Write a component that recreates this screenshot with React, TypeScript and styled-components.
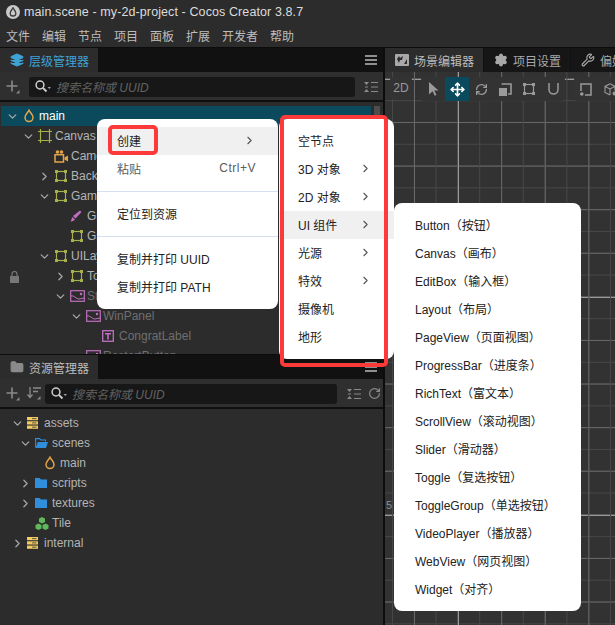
import React from "react";
import styled, { createGlobalStyle } from "styled-components";
import { Layers, ChevronDown, ChevronRight, Settings, Wrench, Move, RefreshCw, RotateCw, Folder } from "lucide-react";

const GlobalStyle = createGlobalStyle`
  html, body {
    margin: 0;
    padding: 0;
    background: #2c2c2c;
    overflow: hidden;
  }
  * { box-sizing: border-box; }
  #root {
    font-family: "Liberation Sans", "Noto Sans CJK SC", sans-serif;
  }
`;

const Window = styled.div`
  position: relative;
  width: 615px;
  height: 625px;
  overflow: hidden;
  display: flex;
  flex-direction: column;
  background: #2c2c2c;
  color: #c8c8c8;
`;

const TitleBar = styled.div`
  height: 24px;
  display: flex;
  align-items: center;
  gap: 4px;
  padding: 0 0 0 6px;
  font-size: 12.5px;
  color: #dcdcdc;
  letter-spacing: 0.1px;
`;

const AppLogo = styled.span`
  width: 14px;
  height: 14px;
  border-radius: 50%;
  background: #c9c9c9;
  display: flex;
  align-items: center;
  justify-content: center;
`;

const MenuBar = styled.div`
  height: 23px;
  display: flex;
  align-items: center;
  gap: 12px;
  padding-left: 6px;
  font-size: 12px;
  color: #bdbdbd;
`;

const Workspace = styled.div`
  flex: 1;
  display: flex;
  min-height: 0;
  background: #0c0c0c;
  padding-top: 1px;
  gap: 2px;
`;

const LeftColumn = styled.div`
  width: 383px;
  display: flex;
  flex-direction: column;
  gap: 1px;
`;

const Panel = styled.div<{ $h?: number }>`
  display: flex;
  flex-direction: column;
  background: #2c2c2c;
  ${(p) => (p.$h ? `height: ${p.$h}px;` : "flex: 1;")}
  overflow: hidden;
`;

const TabStrip = styled.div`
  height: 24px;
  display: flex;
  align-items: stretch;
  background: #111111;
  flex-shrink: 0;
`;

const Tab = styled.div<{ $active?: boolean; $accent?: boolean }>`
  display: flex;
  align-items: center;
  gap: 5px;
  padding: 0 9px 0 10px;
  font-size: 12px;
  white-space: nowrap;
  margin-right: 1px;
  background: ${(p) => (p.$active ? "#2c2c2c" : "#161616")};
  color: ${(p) => (p.$accent ? "#3fa3d6" : p.$active ? "#bcbcbc" : "#a8a8a8")};
`;

const TabFill = styled.div`
  flex: 1;
  display: flex;
  align-items: center;
  justify-content: flex-end;
  padding-right: 6px;
`;

const Toolbar = styled.div<{ $gap: number; $right: number }>`
  height: 30px;
  display: flex;
  align-items: center;
  padding: 1px ${(p) => p.$right}px 0 6px;
  gap: ${(p) => p.$gap}px;
  background: #2f2f2f;
  border-bottom: 2px solid #0f0f0f;
  color: #8a8a8a;
  flex-shrink: 0;
`;

const Cluster = styled.div<{ $ml?: number }>`
  display: flex;
  align-items: center;
  gap: 7px;
  margin-left: ${(p) => p.$ml ?? 0}px;
`;

const SearchBox = styled.div`
  flex: 1;
  height: 20px;
  border-radius: 3px;
  background: #171717;
  display: flex;
  align-items: center;
  gap: 5px;
  padding-left: 6px;
  font-size: 12px;
  font-style: italic;
  color: #626262;
`;

const Tree = styled.div`
  padding-top: 4px;
  flex: 1;
  position: relative;
  overflow: hidden;
`;

const Row = styled.div<{ $pad: number; $selected?: boolean; $dim?: boolean }>`
  height: 20px;
  display: flex;
  align-items: center;
  gap: 3px;
  padding-left: ${(p) => p.$pad - (p.$selected ? 1 : 0)}px;
  font-size: 12px;
  margin-left: ${(p) => (p.$selected ? "1px" : "0")};
  margin-right: ${(p) => (p.$selected ? "12px" : "0")};
  background: ${(p) => (p.$selected ? "#0b4a5c" : "transparent")};
  color: ${(p) => (p.$selected ? "#ffffff" : p.$dim ? "#6f6f6f" : "#b4b4b4")};
  white-space: nowrap;
`;

const Caret = styled.span`
  width: 14px;
  height: 13px;
  display: flex;
  align-items: center;
  justify-content: center;
  color: #a6a6a6;
  flex-shrink: 0;
`;

const IconSlot = styled.span`
  width: 14px;
  height: 14px;
  display: flex;
  align-items: center;
  justify-content: flex-start;
  flex-shrink: 0;
`;

const LockBadge = styled.span`
  position: absolute;
  left: 10px;
  top: 169px;
`;

const ScrollThumb = styled.div`
  position: absolute;
  right: 3px;
  top: 4px;
  width: 6px;
  height: 24px;
  background: #4d4d4d;
`;

const SceneColumn = styled.div`
  flex: 1;
  min-width: 0;
  display: flex;
  flex-direction: column;
  background: #2c2c2c;
`;

const Viewport = styled.div`
  flex: 1;
  position: relative;
  background-color: #323232;
  background-image:
    linear-gradient(90deg, #9a9a9a 1px, transparent 1px),
    linear-gradient(90deg, #686868 1px, transparent 1px),
    linear-gradient(90deg, #474747 1px, transparent 1px),
    linear-gradient(#9a9a9a 1px, transparent 1px),
    linear-gradient(#686868 1px, transparent 1px),
    linear-gradient(#474747 1px, transparent 1px);
  background-size: 218px 100%, 43.6px 100%, 21.8px 100%, 100% 218px, 100% 43.6px, 100% 21.8px;
  background-position: 73px 0, 29px 0, 7px 0, 0 7px, 0 6.4px, 0 6.4px;
`;

const SceneToolbar = styled.div`
  display: flex;
  align-items: flex-start;
  gap: 9px;
  padding: 5px 0 0 5px;
`;

const ToolGroup = styled.div<{ $h?: number }>`
  height: ${(p) => p.$h ?? 24}px;
  display: flex;
  align-items: stretch;
  border-radius: 3px;
  background: #333;
  color: #9a9a9a;
  font-size: 12px;
`;

const Tool = styled.div<{ $active?: boolean; $w?: number }>`
  width: ${(p) => p.$w ?? 24}px;
  display: flex;
  align-items: center;
  justify-content: center;
  background: ${(p) => (p.$active ? "#0b4a5c" : "transparent")};
  color: ${(p) => (p.$active ? "#ffffff" : "#9a9a9a")};
`;

const AxisLabel = styled.span`
  position: absolute;
  left: 1px;
  top: 427px;
  font-size: 11px;
  color: #8c8c8c;
`;

const ContextMenu = styled.div<{ $top: number; $left: number; $w: number }>`
  position: absolute;
  top: ${(p) => p.$top}px;
  left: ${(p) => p.$left}px;
  width: ${(p) => p.$w}px;
  padding: 8px 0;
  background: #ffffff;
  border-radius: 8px;
  color: #1f1f1f;
  font-size: 12px;
  z-index: 3;
`;

const MenuRow = styled.div<{ $hover?: boolean; $muted?: boolean; $inset: number }>`
  height: 28px;
  display: flex;
  align-items: center;
  justify-content: space-between;
  padding: 0 22px 2px ${(p) => p.$inset}px;
  white-space: nowrap;
  background: ${(p) => (p.$hover ? "#f0f0f0" : "transparent")};
  color: ${(p) => (p.$muted ? "#5c5c5c" : "#222")};
`;

const Shortcut = styled.span`
  letter-spacing: 0.5px;
`;

const Arrow = styled.span`
  display: flex;
  color: #555;
`;

const Divider = styled.div`
  height: 1px;
  margin: 8px 0;
  background: #d5e1f2;
`;

const Callout = styled.div<{ $top: number; $left: number; $w: number; $h: number }>`
  position: absolute;
  top: ${(p) => p.$top}px;
  left: ${(p) => p.$left}px;
  width: ${(p) => p.$w}px;
  height: ${(p) => p.$h}px;
  border: 4px solid #fc3a3a;
  border-radius: 5px;
  z-index: 4;
`;

const DrawnIcon = styled.svg`
  display: block;
  flex-shrink: 0;
`;

const drop = "M7 1.2C8 3.6 11 5.6 11 8.6a4 4 0 0 1-8 0C3 5.6 6 3.6 7 1.2Z";

const SceneIcon = () => (
  <DrawnIcon width="14" height="14" viewBox="0 0 14 14" fill="none">
    <path d={drop} stroke="#e4a54a" strokeWidth="1.5" />
  </DrawnIcon>
);

const NodeIcon = ({ color = "#a7b04a" }: { color?: string }) => (
  <DrawnIcon width="14" height="14" viewBox="0 0 14 14" fill="none">
    <rect x="2.5" y="2.5" width="9" height="9" stroke={color} strokeWidth="1.2" />
    <path d="M1 1h3v3H1zM10 1h3v3h-3zM1 10h3v3H1zM10 10h3v3h-3z" fill={color} />
  </DrawnIcon>
);

const CanvasIcon = () => (
  <DrawnIcon width="14" height="14" viewBox="0 0 14 14" fill="none">
    <path d="M0 2.5h14M0 11.5h14M2.5 0v14M11.500 0v14" stroke="#a7b04a" strokeWidth="1.200" />
  </DrawnIcon>
);

const CameraIcon = () => (
  <DrawnIcon width="14" height="13" viewBox="0 0 14 13" fill="none">
    <circle cx="3.500" cy="2" r="1.800" fill="#e4a54a" />
    <circle cx="7.500" cy="2" r="1.800" fill="#e4a54a" />
    <rect x="1" y="4.700" width="8.500" height="7.300" stroke="#e4a54a" strokeWidth="1.500" />
    <path d="M10.500 7.500L14 5.500v6L10.500 9.500Z" fill="#e4a54a" />
  </DrawnIcon>
);

const BrushIcon = () => (
  <DrawnIcon width="12" height="12" viewBox="0 0 12 12">
    <path d="M10 .5l1.500 1.500-6 6.500-2.500-2.500Z" fill="#c06fc0" />
    <path d="M2.500 7l2.500 2.500C4 11 2 11.500.5 11.500 1.500 10.500 1.500 8 2.500 7Z" fill="#c06fc0" />
  </DrawnIcon>
);

const SpriteIcon = () => (
  <DrawnIcon width="15" height="12" viewBox="0 0 15 12" fill="none">
    <rect x="0.7" y="0.7" width="13.6" height="10.6" stroke="#c06fc0" strokeWidth="1.2" />
    <path d="M1 6c3-1 5 3 8 3l5-1" stroke="#c06fc0" />
    <circle cx="11" cy="4" r="1.2" fill="#c06fc0" />
  </DrawnIcon>
);

const LabelIcon = () => (
  <DrawnIcon width="12" height="12" viewBox="0 0 12 12" fill="none">
    <rect x="0.7" y="0.7" width="10.6" height="10.6" stroke="#c06fc0" strokeWidth="1.3" />
    <path d="M3 3h6v1.500H6.800V9.500H5.200V4.500H3Z" fill="#c06fc0" />
  </DrawnIcon>
);

const LockIcon = () => (
  <DrawnIcon width="9" height="12" viewBox="0 0 9 12" fill="none">
    <path d="M2 5V3a2.500 2.500 0 0 1 5 0v2" stroke="#777" strokeWidth="1.200" />
    <rect y="5" width="9" height="7" rx="0.5" fill="#777" />
  </DrawnIcon>
);

const DatabaseIcon = () => (
  <DrawnIcon width="11" height="12" viewBox="0 0 11 12">
    <rect width="11" height="3.2" fill="#f3cb62" />
    <rect y="4.300" width="11" height="3.2" fill="#f3cb62" />
    <rect y="8.600" width="11" height="3.2" fill="#f3cb62" />
    <path d="M5 1.600h4.500M5 5.900h4.500M5 10.200h4.500" stroke="#4a4a3a" strokeWidth="0.9" />
  </DrawnIcon>
);

const FolderIcon = () => (
  <DrawnIcon width="12" height="10" viewBox="0 0 12 10">
    <path d="M0 0h4.500l1.500 1.500H12V10H0Z" fill="#2f8fdc" />
  </DrawnIcon>
);

const FolderOpenIcon = () => (
  <DrawnIcon width="13" height="10" viewBox="0 0 13 10" fill="none">
    <path d="M.6 9.500V.6h3.800l1.500 1.400h4.600v1.500" stroke="#2f8fdc" strokeWidth="1.100" />
    <path d="M2.800 4H13l-2 6H.6Z" fill="#2f8fdc" />
  </DrawnIcon>
);

const CubesIcon = () => (
  <DrawnIcon width="14" height="13" viewBox="0 0 14 13">
    <path d="M7 0l3 1.600v3.400L7 6.600 4 5V1.600Z" fill="#5fb85c" />
    <path d="M3.500 6.400l3 1.600v3.400L3.500 13 .5 11.400V8Z" fill="#5fb85c" />
    <path d="M10.500 6.400l3 1.600v3.400L10.500 13l-3-1.600V8Z" fill="#5fb85c" />
  </DrawnIcon>
);

const SceneTabIcon = () => (
  <DrawnIcon width="14" height="12" viewBox="0 0 14 12">
    <rect width="14" height="12" rx="1" fill="#a8a8a8" />
    <path d="M2 5l2-3 1 2 3-2-1 4-2 0-1 3Z" fill="#2c2c2c" />
    <path d="M9 10l3-5v5Z" fill="#2c2c2c" />
  </DrawnIcon>
);

const BurgerIcon = () => (
  <DrawnIcon width="12" height="10" viewBox="0 0 12 10">
    <path d="M0 0h12v2H0zM0 4h12v2H0zM0 8h12v2H0z" fill="#8f8f8f" />
  </DrawnIcon>
);

const CollapseIcon = () => (
  <DrawnIcon width="14" height="12" viewBox="0 0 14 12">
    <path d="M0 1h5L2.500 4ZM0 11h5L2.500 8Z" fill="#8a8a8a" />
    <path d="M7 1.500h7M7 6h7M7 10.500h7M1 6h3" stroke="#8a8a8a" strokeWidth="1.200" />
  </DrawnIcon>
);

const SortIcon = () => (
  <DrawnIcon width="14" height="13" viewBox="0 0 14 13" fill="none">
    <path d="M3 0v10M.5 7.500L3 10.500l2.500-3M6 1h8M6 4.500h5" stroke="#8a8a8a" strokeWidth="1.300" />
    <path d="M13.500 9v3.500H10Z" fill="#8a8a8a" />
  </DrawnIcon>
);

const AddIcon = () => (
  <DrawnIcon width="14" height="14" viewBox="0 0 14 14">
    <path d="M5.200 0.500h1.600v4.700h4.700v1.600H6.800v4.700H5.200V6.800H.5V5.200h4.700Z" fill="#8a8a8a" />
    <path d="M13.500 10v3.500H10Z" fill="#8a8a8a" />
  </DrawnIcon>
);

const SearchIcon = () => (
  <DrawnIcon width="16" height="13" viewBox="0 0 16 13" fill="none">
    <circle cx="5" cy="5" r="3.900" stroke="#cfcfcf" strokeWidth="1.500" />
    <path d="M8 8l3.500 3.500" stroke="#cfcfcf" strokeWidth="1.800" />
    <path d="M12.500 7h3.500l-1.750 2Z" fill="#a0a0a0" />
  </DrawnIcon>
);

const CursorIcon = () => (
  <DrawnIcon width="11" height="14" viewBox="0 0 11 14">
    <path d="M1 0l9.500 8.500H6.300L8.500 13l-1.800.8-2.100-4.500L1 12.500Z" fill="#9a9a9a" />
  </DrawnIcon>
);

const ScaleIcon = () => (
  <DrawnIcon width="13" height="13" viewBox="0 0 13 13" fill="none">
    <path d="M2.500 1h9.500v10h-3" stroke="#9a9a9a" strokeWidth="1.600" />
    <path d="M0 5h8v8H0z" fill="#9a9a9a" />
  </DrawnIcon>
);

const MagnetIcon = () => (
  <DrawnIcon width="11" height="12" viewBox="0 0 11 12" fill="none">
    <path d="M1 0v6.500a4.500 4.500 0 0 0 9 0V0" stroke="#9a9a9a" strokeWidth="1.500" />
  </DrawnIcon>
);

const FrameIcon = () => (
  <DrawnIcon width="12" height="13" viewBox="0 0 12 13" fill="none">
    <path d="M1 8V1h10v11H5" stroke="#9a9a9a" strokeWidth="1.500" />
    <circle cx="1.800" cy="11" r="1.800" fill="#9a9a9a" />
  </DrawnIcon>
);

const CubeDotIcon = () => (
  <DrawnIcon width="13" height="13" viewBox="0 0 13 13" fill="none">
    <path d="M6 .8l5 2.600v4M6 .8L1 3.400v6L6 12M1 3.400L6 6l5-2.600M6 6v6" stroke="#9a9a9a" strokeWidth="1.100" />
    <circle cx="10.500" cy="10.500" r="2" fill="#9a9a9a" />
  </DrawnIcon>
);

const LogoDrop = () => (
  <DrawnIcon width="10" height="10" viewBox="0 0 14 14" fill="none">
    <path d={drop} stroke="#3a3a3a" strokeWidth="1.800" />
  </DrawnIcon>
);

type NodeRow = {
  level: number;
  caret?: "open" | "closed";
  icon: React.ReactNode;
  label: string;
  selected?: boolean;
  dim?: boolean;
};

const hierarchy: NodeRow[] = [
  { level: 0, caret: "open", icon: <SceneIcon />, label: "main", selected: true },
  { level: 1, caret: "open", icon: <CanvasIcon />, label: "Canvas" },
  { level: 2, icon: <CameraIcon />, label: "Camera" },
  { level: 2, caret: "closed", icon: <NodeIcon />, label: "Background" },
  { level: 2, caret: "open", icon: <NodeIcon />, label: "GameArea" },
  { level: 3, icon: <BrushIcon />, label: "Grid" },
  { level: 3, icon: <NodeIcon />, label: "Grid" },
  { level: 2, caret: "open", icon: <NodeIcon />, label: "UILayer" },
  { level: 3, caret: "closed", icon: <NodeIcon />, label: "TopBar" },
  { level: 3, caret: "open", icon: <SpriteIcon />, label: "StartPanel", dim: true },
  { level: 4, caret: "open", icon: <SpriteIcon />, label: "WinPanel", dim: true },
  { level: 5, icon: <LabelIcon />, label: "CongratLabel", dim: true },
  { level: 4, caret: "open", icon: <SpriteIcon />, label: "RestartButton", dim: true },
];

const assets: NodeRow[] = [
  { level: 0, caret: "open", icon: <DatabaseIcon />, label: "assets" },
  { level: 1, caret: "open", icon: <FolderOpenIcon />, label: "scenes" },
  { level: 2, icon: <SceneIcon />, label: "main" },
  { level: 1, caret: "closed", icon: <FolderIcon />, label: "scripts" },
  { level: 1, caret: "closed", icon: <FolderIcon />, label: "textures" },
  { level: 1, icon: <CubesIcon />, label: "Tile" },
  { level: 0, caret: "closed", icon: <DatabaseIcon />, label: "internal" },
];

const TreeRows = ({ rows, base, indent }: { rows: NodeRow[]; base: number; indent: number }) => (
  <>
    {rows.map((r, i) => (
      <Row key={i} $pad={base + r.level * indent} $selected={r.selected} $dim={r.dim}>
        <Caret>
          {r.caret === "open" && <ChevronDown size={13} strokeWidth={2.4} />}
          {r.caret === "closed" && <ChevronRight size={13} strokeWidth={2.4} />}
        </Caret>
        <IconSlot>{r.icon}</IconSlot>
        {r.label}
      </Row>
    ))}
  </>
);

const createItems: { label: string; sub?: boolean; hover?: boolean }[] = [
  { label: "空节点" },
  { label: "3D 对象", sub: true },
  { label: "2D 对象", sub: true },
  { label: "UI 组件", sub: true, hover: true },
  { label: "光源", sub: true },
  { label: "特效", sub: true },
  { label: "摄像机" },
  { label: "地形" },
];

const uiItems = [
  "Button（按钮）",
  "Canvas（画布）",
  "EditBox（输入框）",
  "Layout（布局）",
  "PageView（页面视图）",
  "ProgressBar（进度条）",
  "RichText（富文本）",
  "ScrollView（滚动视图）",
  "Slider（滑动器）",
  "Toggle（复选按钮）",
  "ToggleGroup（单选按钮）",
  "VideoPlayer（播放器）",
  "WebView（网页视图）",
  "Widget（对齐）",
];

export default function App() {
  return (
    <>
      <GlobalStyle />
      <Window>
        <TitleBar>
          <AppLogo>
            <LogoDrop />
          </AppLogo>
          main.scene - my-2d-project - Cocos Creator 3.8.7
        </TitleBar>
        <MenuBar>
          {["文件", "编辑", "节点", "项目", "面板", "扩展", "开发者", "帮助"].map((m) => (
            <span key={m}>{m}</span>
          ))}
        </MenuBar>
        <Workspace>
          <LeftColumn>
            <Panel $h={306}>
              <TabStrip>
                <Tab $active $accent>
                  <Layers size={14} color="#3fa3d6" fill="#3fa3d6" />
                  层级管理器
                </Tab>
                <TabFill>
                  <BurgerIcon />
                </TabFill>
              </TabStrip>
              <Toolbar $gap={9} $right={5}>
                <AddIcon />
                <SearchBox>
                  <SearchIcon />
                  搜索名称或 UUID
                </SearchBox>
                <CollapseIcon />
              </Toolbar>
              <Tree>
                <TreeRows rows={hierarchy} base={5} indent={16} />
                <LockBadge>
                  <LockIcon />
                </LockBadge>
                <ScrollThumb />
              </Tree>
            </Panel>
            <Panel>
              <TabStrip>
                <Tab $active>
                  <Folder size={14} color="#8a8a8a" fill="#8a8a8a" />
                  资源管理器
                </Tab>
                <TabFill>
                  <BurgerIcon />
                </TabFill>
              </TabStrip>
              <Toolbar $gap={4} $right={2}>
                <Cluster>
                  <AddIcon />
                  <SortIcon />
                </Cluster>
                <SearchBox>
                  <SearchIcon />
                  搜索名称或 UUID
                </SearchBox>
                <Cluster $ml={6}>
                  <CollapseIcon />
                  <RotateCw size={13} strokeWidth={2.2} />
                </Cluster>
              </Toolbar>
              <Tree>
                <TreeRows rows={assets} base={10} indent={8} />
              </Tree>
            </Panel>
          </LeftColumn>
          <SceneColumn>
            <TabStrip>
              <Tab $active>
                <SceneTabIcon />
                场景编辑器
              </Tab>
              <Tab>
                <Settings size={14} color="#a8a8a8" fill="#a8a8a8" />
                项目设置
              </Tab>
              <Tab>
                <Wrench size={14} color="#a8a8a8" />
                偏好设置
              </Tab>
            </TabStrip>
            <Viewport>
              <SceneToolbar>
                <ToolGroup $h={22}>
                  <Tool $w={22}>2D</Tool>
                </ToolGroup>
                <ToolGroup>
                  <Tool><CursorIcon /></Tool>
                  <Tool $active><Move size={15} strokeWidth={2.6} /></Tool>
                  <Tool><RefreshCw size={13} strokeWidth={2.4} /></Tool>
                  <Tool><ScaleIcon /></Tool>
                  <Tool><NodeIcon color="#9a9a9a" /></Tool>
                  <Tool><MagnetIcon /></Tool>
                </ToolGroup>
                <ToolGroup>
                  <Tool><FrameIcon /></Tool>
                  <Tool><CubeDotIcon /></Tool>
                </ToolGroup>
              </SceneToolbar>
              <AxisLabel>5</AxisLabel>
            </Viewport>
          </SceneColumn>
        </Workspace>

        <ContextMenu $top={119} $left={97} $w={181}>
          <MenuRow $hover $inset={20}>
            创建
            <Arrow><ChevronRight size={13} /></Arrow>
          </MenuRow>
          <MenuRow $muted $inset={20}>
            粘贴
            <Shortcut>Ctrl+V</Shortcut>
          </MenuRow>
          <Divider />
          <MenuRow $inset={20}>定位到资源</MenuRow>
          <Divider />
          <MenuRow $inset={20}>复制并打印 UUID</MenuRow>
          <MenuRow $inset={20}>复制并打印 PATH</MenuRow>
        </ContextMenu>

        <ContextMenu $top={119} $left={279} $w={115}>
          {createItems.map((it) => (
            <MenuRow key={it.label} $hover={it.hover} $inset={19}>
              {it.label}
              {it.sub && (
                <Arrow><ChevronRight size={13} /></Arrow>
              )}
            </MenuRow>
          ))}
        </ContextMenu>

        <ContextMenu $top={203} $left={394} $w={187}>
          {uiItems.map((label) => (
            <MenuRow key={label} $inset={21}>
              {label}
            </MenuRow>
          ))}
        </ContextMenu>

        <Callout $top={125} $left={108} $w={50} $h={30} />
        <Callout $top={115} $left={280} $w={108} $h={252} />
      </Window>
    </>
  );
}
